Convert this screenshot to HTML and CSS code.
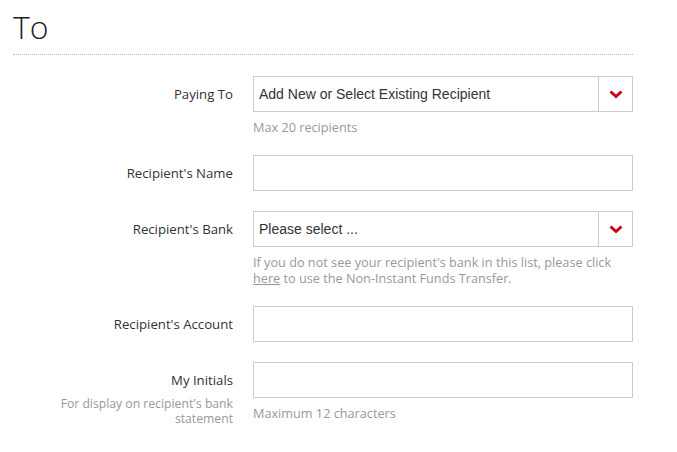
FILE: index.html
```html
<!DOCTYPE html>
<html>
<head>
<meta charset="utf-8">
<link rel="stylesheet" href="styles.css">
</head>
<body>
<div class="page">
  <h1 class="title">To</h1>
  <div class="rule"></div>
  <form class="form">
    <div class="row">
      <div class="label-col"><div class="label">Paying To</div></div>
      <div class="field-col">
        <div class="select">
          <span class="select-text">Add New or Select Existing Recipient</span>
          <span class="select-btn"><svg width="14" height="9" viewBox="0 0 14 9"><path d="M1.5 1.5 L7 6.5 L12.5 1.5" fill="none" stroke="#d0021b" stroke-width="3"/></svg></span>
        </div>
        <div class="help">Max 20 recipients</div>
      </div>
    </div>
    <div class="row">
      <div class="label-col"><div class="label">Recipient's Name</div></div>
      <div class="field-col"><div class="input"></div></div>
    </div>
    <div class="row">
      <div class="label-col"><div class="label">Recipient's Bank</div></div>
      <div class="field-col">
        <div class="select">
          <span class="select-text">Please select ...</span>
          <span class="select-btn"><svg width="14" height="9" viewBox="0 0 14 9"><path d="M1.5 1.5 L7 6.5 L12.5 1.5" fill="none" stroke="#d0021b" stroke-width="3"/></svg></span>
        </div>
        <div class="help">If you do not see your recipient's bank in this list, please click <a class="link">here</a> to use the Non-Instant Funds Transfer.</div>
      </div>
    </div>
    <div class="row">
      <div class="label-col"><div class="label">Recipient's Account</div></div>
      <div class="field-col"><div class="input"></div></div>
    </div>
    <div class="row">
      <div class="label-col">
        <div class="label">My Initials</div>
        <div class="label-help">For display on recipient's bank statement</div>
      </div>
      <div class="field-col">
        <div class="input"></div>
        <div class="help">Maximum 12 characters</div>
      </div>
    </div>
  </form>
</div>
</body>
</html>
```
FILE: styles.css
```css
html, body { margin: 0; padding: 0; background: #fff; }
body { font-family: "Open Sans", "Noto Sans", sans-serif; color: #333; }
.page { width: 620px; padding: 0 0 0 13px; }
.title {
  margin: 0;
  padding-top: 9px;
  font-weight: 300;
  font-size: 32px;
  line-height: 36px;
  color: #222;
}
.rule { margin-top: 9px; border-top: 1px dotted #bbb; }
.form { padding-top: 21px; display: flex; flex-direction: column; gap: 20px; }
.row { display: flex; gap: 20px; }
.label-col { width: 220px; text-align: right; }
.label { font-size: 13.2px; line-height: 16px; padding-top: 10px; color: #333; }
.label-help { font-size: 12.2px; line-height: 15px; color: #999; margin-top: 8px; }
.field-col { width: 380px; }
.select, .input {
  box-sizing: border-box;
  height: 36px;
  border: 1px solid #ccc;
  display: flex;
  align-items: center;
}
.select-text {
  flex: 1;
  padding-left: 5px;
  font-family: "Liberation Sans", Arial, sans-serif;
  font-size: 14px;
  color: #333;
}
.select-btn {
  width: 33px;
  height: 100%;
  border-left: 1px solid #ccc;
  display: flex;
  align-items: center;
  justify-content: center;
}
.help { margin-top: 7px; font-size: 12.7px; line-height: 16px; color: #999; }
.link { color: #999; text-decoration: underline; }
```
